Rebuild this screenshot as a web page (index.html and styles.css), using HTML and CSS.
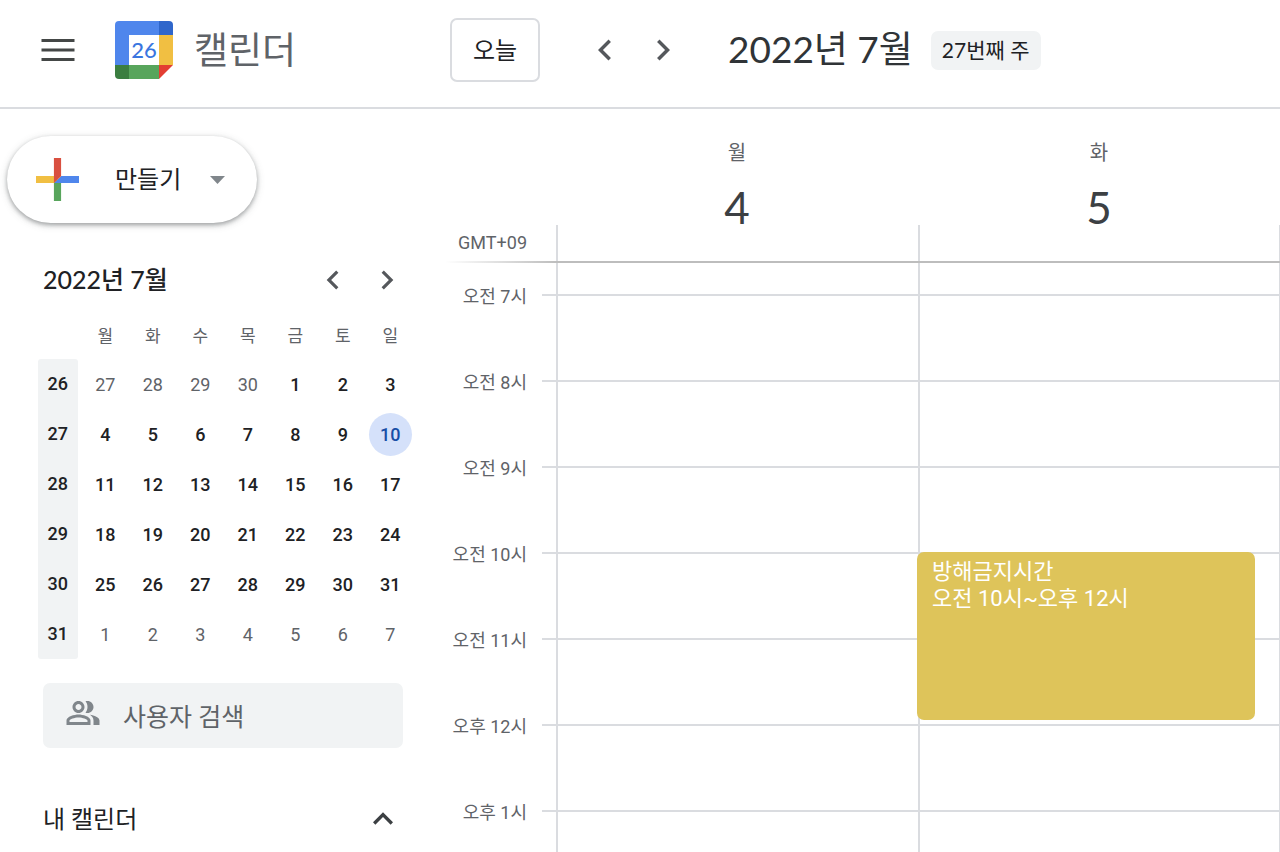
FILE: index.html
```html
<!DOCTYPE html>
<html lang="ko">
<head>
    <meta charset="UTF-8">
    <meta name="viewport" content="width=device-width, initial-scale=1.0">
    <title>캘린더</title>
    <link rel="stylesheet" href="styles.css">
</head>
<body>
    <!-- Top bar -->
    <header class="topbar">
        <div class="brand">
            <button class="icon-btn" aria-label="기본 메뉴">
                <svg width="44" height="44" viewBox="0 0 24 24" fill="#444746"><path d="M3 18h18v-1.6H3zM3 12.8h18v-1.6H3zM3 6v1.6h18V6z"/></svg>
            </button>
            <svg class="logo" width="58" height="58" viewBox="0 0 58 58">
                <path fill="#4f86ec" d="M4 0h40v14H14v30H0V4a4 4 0 0 1 4-4z"/>
                <path fill="#2f66cb" d="M44 0h10a4 4 0 0 1 4 4v10H44z"/>
                <path fill="#f1bf42" d="M44 14h14v30H44z"/>
                <path fill="#58a55c" d="M14 44h30v14H14z"/>
                <path fill="#3b7e40" d="M0 44h14v14H4a4 4 0 0 1-4-4z"/>
                <path fill="#e33e32" d="M44 44h14L44 58z"/>
                <path fill="#fff" d="M14 14h30v30H14z"/>
                <text class="logo-day" x="29" y="37" text-anchor="middle">26</text>
            </svg>
            <span class="brand-name">캘린더</span>
        </div>
        <button class="today-btn">오늘</button>
        <div class="week-nav">
            <button class="icon-btn" aria-label="이전 주">
                <svg width="42" height="42" viewBox="0 0 24 24" fill="#55585c"><path d="M15.41 7.41L14 6l-6 6 6 6 1.41-1.41L10.83 12z"/></svg>
            </button>
            <button class="icon-btn" aria-label="다음 주">
                <svg width="42" height="42" viewBox="0 0 24 24" fill="#55585c"><path d="M10 6L8.59 7.41 13.17 12l-4.58 4.59L10 18l6-6z"/></svg>
            </button>
        </div>
        <h1 class="period">2022년 7월</h1>
        <span class="week-badge">27번째 주</span>
    </header>

    <div class="content">
        <!-- Sidebar -->
        <aside class="sidebar">
            <button class="create-btn">
                <svg width="43" height="43" viewBox="6 6 24 24">
                    <path fill="#58a55c" d="M16 16v14h4V20z"/>
                    <path fill="#4f86ec" d="M30 16H20l-4 4h14z"/>
                    <path fill="#f1bf42" d="M6 16v4h10l4-4z"/>
                    <path fill="#d95040" d="M20 16V6h-4v14z"/>
                </svg>
                <span>만들기</span>
                <svg class="caret" width="15" height="8" viewBox="0 0 15 8" fill="#80868b"><path d="M0 0h15L7.500 8z"/></svg>
            </button>

            <div class="mini-head">
                <h2>2022년 7월</h2>
                <div class="mini-nav">
                    <button class="icon-btn" aria-label="이전 달">
                        <svg width="38" height="38" viewBox="0 0 24 24" fill="#55585c"><path d="M15.41 7.41L14 6l-6 6 6 6 1.41-1.41L10.83 12z"/></svg>
                    </button>
                    <button class="icon-btn" aria-label="다음 달">
                        <svg width="38" height="38" viewBox="0 0 24 24" fill="#55585c"><path d="M10 6L8.59 7.41 13.17 12l-4.58 4.59L10 18l6-6z"/></svg>
                    </button>
                </div>
            </div>

            <table class="mini-cal">
                <thead>
                    <tr><td></td><th>월</th><th>화</th><th>수</th><th>목</th><th>금</th><th>토</th><th>일</th></tr>
                </thead>
                <tbody>
                    <tr><th><span class="week-no">26</span></th><td class="other">27</td><td class="other">28</td><td class="other">29</td><td class="other">30</td><td>1</td><td>2</td><td>3</td></tr>
                    <tr><th><span class="week-no">27</span></th><td>4</td><td>5</td><td>6</td><td>7</td><td>8</td><td>9</td><td><span class="today">10</span></td></tr>
                    <tr><th><span class="week-no">28</span></th><td>11</td><td>12</td><td>13</td><td>14</td><td>15</td><td>16</td><td>17</td></tr>
                    <tr><th><span class="week-no">29</span></th><td>18</td><td>19</td><td>20</td><td>21</td><td>22</td><td>23</td><td>24</td></tr>
                    <tr><th><span class="week-no">30</span></th><td>25</td><td>26</td><td>27</td><td>28</td><td>29</td><td>30</td><td>31</td></tr>
                    <tr><th><span class="week-no">31</span></th><td class="other">1</td><td class="other">2</td><td class="other">3</td><td class="other">4</td><td class="other">5</td><td class="other">6</td><td class="other">7</td></tr>
                </tbody>
            </table>

            <label class="search">
                <svg width="36" height="36" viewBox="0 0 24 24" fill="#80868b"><path d="M16.670 13.130C18.040 14.060 19 15.320 19 17v3h4v-3c0-2.180-3.570-3.470-6.330-3.870zM15 12c2.210 0 4-1.790 4-4s-1.790-4-4-4c-.47 0-.91.1-1.330.24C14.500 5.270 15 6.580 15 8s-.5 2.730-1.330 3.760c.42.14.86.24 1.330.24zM9 12c2.210 0 4-1.790 4-4s-1.790-4-4-4-4 1.790-4 4 1.790 4 4 4zm0-6c1.100 0 2 .9 2 2s-.9 2-2 2-2-.9-2-2 .9-2 2-2zm0 7c-2.670 0-8 1.340-8 4v3h16v-3c0-2.660-5.330-4-8-4zm6 5H3v-.99C3.200 16.290 6.300 15 9 15s5.800 1.290 6 2z"/></svg>
                <input type="text" placeholder="사용자 검색" aria-label="사용자 검색">
            </label>

            <button class="section-toggle" aria-expanded="true">
                <span>내 캘린더</span>
                <svg width="40" height="40" viewBox="0 0 24 24" fill="#3c4043"><path d="M12 8l-6 6 1.410 1.410L12 10.830l4.590 4.580L18 14z"/></svg>
            </button>
        </aside>

        <!-- Week view -->
        <main class="week">
            <div class="row day-heads">
                <div></div>
                <div class="day-head"><span class="day-name">월</span><span class="day-num">4</span></div>
                <div class="day-head"><span class="day-name">화</span><span class="day-num">5</span></div>
            </div>
            <div class="row all-day">
                <div class="zone">GMT+09</div>
                <div class="cell"></div>
                <div class="cell"></div>
            </div>
            <div class="divider"></div>
            <div class="hours">
                <div class="row lead">
                    <div></div><div class="cell"></div><div class="cell"></div>
                </div>
                <div class="row hour">
                    <div class="time">오전 7시</div><div class="cell"></div><div class="cell"></div>
                </div>
                <div class="row hour">
                    <div class="time">오전 8시</div><div class="cell"></div><div class="cell"></div>
                </div>
                <div class="row hour">
                    <div class="time">오전 9시</div><div class="cell"></div><div class="cell"></div>
                </div>
                <div class="row hour">
                    <div class="time">오전 10시</div>
                    <div class="cell"></div>
                    <div class="cell">
                        <div class="event">
                            <div>방해금지시간</div>
                            <div>오전 10시~오후 12시</div>
                        </div>
                    </div>
                </div>
                <div class="row hour">
                    <div class="time">오전 11시</div><div class="cell"></div><div class="cell"></div>
                </div>
                <div class="row hour">
                    <div class="time">오후 12시</div><div class="cell"></div><div class="cell"></div>
                </div>
                <div class="row hour">
                    <div class="time">오후 1시</div><div class="cell"></div><div class="cell"></div>
                </div>
            </div>
        </main>
    </div>
</body>
</html>
```
FILE: styles.css
```css
/* General */
* {
    box-sizing: border-box;
}

body {
    margin: 0;
    height: 100vh;
    display: flex;
    flex-direction: column;
    overflow: hidden;
    background-color: #fff;
    color: #202124;
    font-family: Roboto, 'Noto Sans CJK KR', sans-serif;
}

button {
    padding: 0;
    border: none;
    background: none;
    color: inherit;
    font-family: inherit;
    cursor: pointer;
}

h1, h2 {
    margin: 0;
}

svg {
    display: block;
    flex-shrink: 0;
}

/* Top bar */
.topbar {
    display: flex;
    align-items: center;
    height: 109px;
    padding: 0 36px 7px;
    border-bottom: 2px solid #dadce0;
    flex-shrink: 0;
}

.brand {
    display: flex;
    align-items: center;
    width: 414px;
}

.logo {
    margin: 0 21px 0 35px;
}

.logo-day {
    font-family: Lato, sans-serif;
    font-size: 22px;
    font-weight: 500;
    fill: #3a76e0;
}

.brand-name {
    padding-top: 4px;
    font-size: 37px;
    line-height: 44px;
    color: #5f6368;
}

.today-btn {
    width: 90px;
    height: 64px;
    padding-bottom: 4px;
    border: 2px solid #dadce0;
    border-radius: 7px;
    font-size: 24px;
}

.week-nav {
    display: flex;
    gap: 16px;
    margin: 0 44px;
}

.period {
    padding-bottom: 2px;
    font-family: Lato, 'Noto Sans CJK KR', sans-serif;
    font-size: 37px;
    font-weight: 400;
    line-height: 44px;
    color: #303437;
}

.week-badge {
    margin-left: 18px;
    padding: 0 11px 2px;
    border-radius: 7px;
    background-color: #f1f3f4;
    font-family: Lato, 'Noto Sans CJK KR', sans-serif;
    font-size: 21px;
    line-height: 37px;
}

/* Layout */
.content {
    display: flex;
    flex: 1;
    min-height: 0;
}

.sidebar {
    width: 445px;
    flex-shrink: 0;
}

.week {
    display: flex;
    flex-direction: column;
    flex: 1;
    min-width: 0;
}

/* Create button */
.create-btn {
    display: flex;
    align-items: center;
    width: 250px;
    height: 87px;
    margin: 27px 0 0 7px;
    padding: 0 32px 0 29px;
    border-radius: 44px;
    box-shadow: 0 2px 4px rgba(60, 64, 67, 0.4), 0 2px 8px rgba(60, 64, 67, 0.18);
    font-size: 24px;
}

.create-btn span {
    margin-left: 36px;
    padding-bottom: 4px;
}

.caret {
    margin-left: auto;
}

/* Mini calendar */
.mini-head {
    display: flex;
    justify-content: space-between;
    align-items: center;
    height: 38px;
    margin: 38px 39px 0 43px;
}

.mini-head h2 {
    padding-bottom: 4px;
    font-family: Lato, 'Noto Sans CJK KR', sans-serif;
    font-size: 25px;
    font-weight: 500;
}

.mini-nav {
    display: flex;
    gap: 16px;
}

.mini-cal {
    width: 380px;
    margin: 10px 0 0 34px;
    border-collapse: collapse;
    table-layout: fixed;
    font-size: 18px;
}

.mini-cal th,
.mini-cal td {
    height: 50px;
    padding: 0;
    text-align: center;
    font-weight: 500;
}

.mini-cal thead th {
    font-size: 17px;
    font-weight: 400;
    color: #5f6368;
}

.mini-cal .other {
    font-weight: 400;
    color: #5f6368;
}

.week-no {
    display: block;
    width: 40px;
    margin: 0 auto;
    background-color: #f1f3f4;
    line-height: 50px;
}

.mini-cal tbody tr:first-child .week-no {
    border-radius: 3px 3px 0 0;
}

.mini-cal tbody tr:last-child .week-no {
    border-radius: 0 0 3px 3px;
}

.today {
    display: block;
    width: 43px;
    margin: 0 auto;
    border-radius: 50%;
    background-color: #d5e1fa;
    color: #174ea6;
    line-height: 43px;
}

/* People search */
.search {
    display: flex;
    align-items: center;
    height: 65px;
    margin: 24px 42px 0 43px;
    padding: 0 22px;
    border-radius: 7px;
    background-color: #f1f3f4;
}

.search svg {
    margin-bottom: 6px;
}

.search input {
    width: 100%;
    margin-left: 22px;
    padding: 4px 0 0;
    border: none;
    outline: none;
    background: none;
    font-family: inherit;
    font-size: 25px;
}

.search input::placeholder {
    color: #5f6368;
}

.section-toggle {
    display: flex;
    justify-content: space-between;
    align-items: center;
    width: 360px;
    margin: 51px 0 0 43px;
    font-size: 24px;
}

.section-toggle span {
    padding-bottom: 4px;
}

/* Week view */
.row {
    display: grid;
    grid-template-columns: 111px 1fr 1fr;
}

.cell {
    position: relative;
    border-left: 2px solid #dadce0;
}

.cell:last-child {
    border-right: 1px solid #dadce0;
}

.day-head {
    display: flex;
    flex-direction: column;
    align-items: center;
    height: 116px;
    padding-top: 32px;
}

.day-name {
    font-size: 20px;
    line-height: 24px;
    color: #5f6368;
}

.day-num {
    margin-top: 16px;
    font-family: Lato, sans-serif;
    font-size: 44px;
    line-height: 52px;
    color: #3c4043;
}

.all-day {
    height: 36px;
}

.zone,
.time {
    padding-right: 29px;
    text-align: right;
    font-size: 18px;
    line-height: 36px;
    color: #5f6368;
}

.divider {
    height: 2px;
    flex-shrink: 0;
    background: linear-gradient(to right, #fff, #bdbdbd 112px);
}

.hours {
    flex: 1;
    min-height: 0;
    overflow: hidden;
}

.lead {
    height: 31px;
}

.hour {
    height: 86px;
    background: linear-gradient(#dadce0, #dadce0) right top / calc(100% - 97px) 2px no-repeat;
}

.time {
    margin-top: -15px;
}

/* Event */
.event {
    position: absolute;
    top: 0;
    left: -3px;
    right: 24px;
    height: 168px;
    padding: 6px 15px;
    border-radius: 7px;
    background-color: #dec45a;
    color: #fff;
    font-size: 22px;
    line-height: 27px;
    z-index: 1;
}
```
